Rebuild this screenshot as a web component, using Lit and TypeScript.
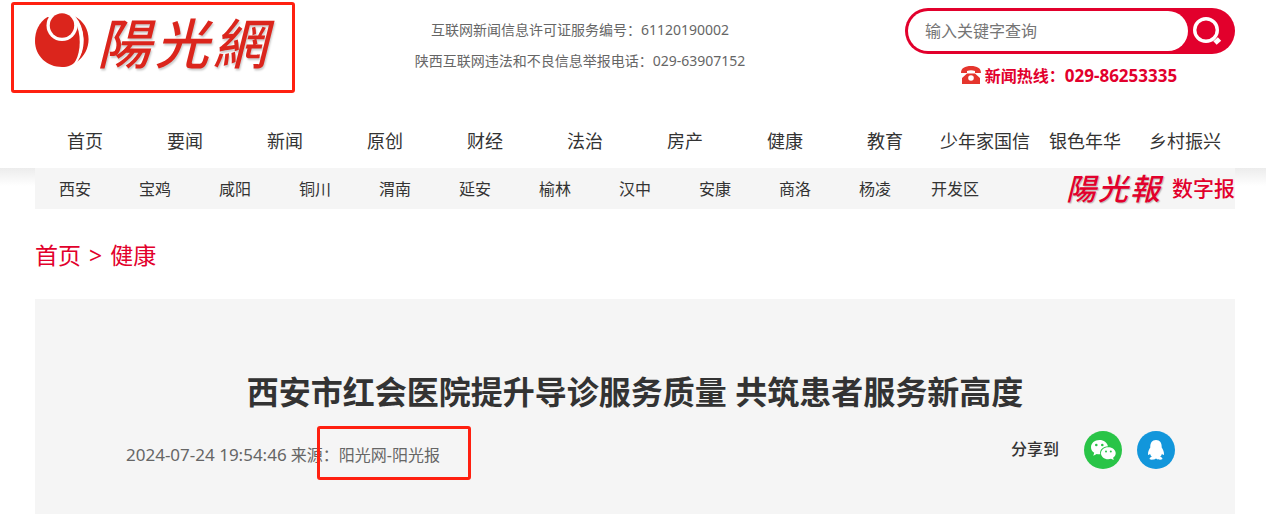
import { LitElement, html, css } from "lit";
import { customElement } from "lit/decorators.js";

const channels = ["首页", "要闻", "新闻", "原创", "财经", "法治", "房产", "健康", "教育", "少年家国信", "银色年华", "乡村振兴"];
const cities = ["西安", "宝鸡", "咸阳", "铜川", "渭南", "延安", "榆林", "汉中", "安康", "商洛", "杨凌", "开发区"];

@customElement("app-root")
export class AppRoot extends LitElement {
  static styles = css`
    :host {
      display: block;
      font-family: "Noto Sans", "Noto Sans CJK SC", sans-serif;
      font-size: 16px;
      color: #333;
      background: #fff;
    }
    * { box-sizing: border-box; }
    a { color: inherit; text-decoration: none; }
    .wrap { padding: 0 31px 0 35px; }
    .top { display: flex; height: 114px; }
    .brand { position: relative; width: 350px; flex: none; }
    .logo { display: flex; align-items: center; height: 82px; gap: 6px; }
    .emblem { width: 56px; height: 56px; flex: none; }
    .brush {
      display: flex;
      font-family: "Noto Sans CJK TC", "Noto Sans CJK SC", sans-serif;
      font-style: italic;
      font-weight: 500;
      line-height: 1;
    }
    .brush-lg { font-size: 54px; gap: 4px; color: #db251c; text-shadow: 1px 2px 2px #ccc; }
    .brush-sm { font-size: 30px; gap: 2px; color: #e2002c; text-shadow: 1px 1px 1px #bbb; }
    .mark { position: absolute; border: 3px solid #ff2010; border-radius: 3px; pointer-events: none; }
    .mark-logo { left: -24px; top: 2px; width: 284px; height: 91px; }
    .license {
      width: 390px;
      flex: none;
      padding-top: 14px;
      text-align: center;
      font-size: 14px;
      line-height: 31px;
      color: #666;
    }
    .license p { margin: 0; }
    .tools { width: 330px; flex: none; margin-left: auto; padding-top: 8px; }
    .search { display: flex; height: 46px; padding: 3px; border-radius: 23px; background: #e2002c; }
    .field {
      flex: 1;
      min-width: 0;
      border: 0;
      outline: 0;
      border-radius: 20px;
      padding: 0 17px;
      font: inherit;
      color: #333;
      background: #fff;
    }
    .field::placeholder { color: #757575; opacity: 1; }
    .go { width: 44px; padding: 0; border: 0; background: none; cursor: pointer; }
    .go svg { display: block; width: 38px; height: 38px; }
    .hotline {
      display: flex;
      align-items: center;
      justify-content: center;
      height: 42px;
      margin: 0;
      padding-right: 2px;
      font-weight: 700;
      color: #e2002c;
    }
    .hotline svg { width: 20px; height: 18px; margin-right: 4px; }
    .digits { font-size: 17px; }
    .channels { display: grid; grid-template-columns: repeat(12, 1fr); height: 54px; }
    .channels a { text-align: center; font-size: 18px; line-height: 54px; white-space: nowrap; }
    .band { background: linear-gradient(#ececec, #fff 18px); }
    .sub { display: flex; height: 41px; background: #f5f5f5; }
    .cities { display: grid; grid-template-columns: repeat(12, 1fr); flex: 0 1 960px; }
    .cities a { text-align: center; line-height: 42px; white-space: nowrap; }
    .paper {
      display: flex;
      align-items: center;
      gap: 12px;
      margin-left: auto;
      padding-bottom: 4px;
      font-size: 21px;
      font-weight: 500;
      color: #e2002c;
      font-family: "Noto Sans CJK SC", sans-serif;
      white-space: nowrap;
    }
    .crumbs { display: flex; gap: 8px; height: 90px; font-size: 23px; line-height: 92px; color: #e2002c; }
    .article { padding: 67px 60px 45px 91px; background: #f5f5f5; }
    .title { margin: 0 31px 0 0; text-align: center; font-size: 32px; line-height: 52px; font-weight: 700; }
    .info { display: flex; justify-content: space-between; align-items: flex-start; padding-top: 13px; }
    .meta { margin: 0; line-height: 24px; padding-top: 12px; color: #666; }
    .meta time { font-size: 17px; }
    .source { position: relative; }
    .mark-source { left: -22px; top: -18px; width: 154px; height: 54px; }
    .share { display: flex; align-items: center; gap: 15px; font-weight: 500; font-family: "Noto Sans CJK SC", sans-serif; }
    .share-label { padding: 0 10px 4px 0; }
    .share svg { display: block; width: 38px; height: 38px; }
  `;

  render() {
    return html`
      <header>
        <div class="wrap top">
          <div class="brand">
            <a class="logo" href="#" aria-label="陽光網">
              <svg class="emblem" viewBox="0 0 56 56" aria-hidden="true">
                <path fill="#db251c" d="M12.500 4C4 9 0 18 0 28C0 43 12 54 27 54C33 54 38 52 40.500 48C46 38 46.500 20 40 9Z" />
                <circle cx="27" cy="12.500" r="15.500" fill="#fff" />
                <circle cx="27" cy="12.500" r="12.200" fill="#db251c" />
                <path fill="#db251c" d="M39 3C58 12 58 38 41.500 49C51 36 51 16 39 3Z" />
                <path fill="none" stroke="#fff" stroke-width="1.500" d="M39 3C50.500 16 50.500 36 41 49.500" />
              </svg>
              <span class="brush brush-lg"><span>陽</span><span>光</span><span>網</span></span>
            </a>
            <span class="mark mark-logo"></span>
          </div>
          <div class="license">
            <p>互联网新闻信息许可证服务编号：61120190002</p>
            <p>陕西互联网违法和不良信息举报电话：029-63907152</p>
          </div>
          <div class="tools">
            <form class="search" role="search" @submit=${(e: Event) => e.preventDefault()}>
              <input class="field" type="text" aria-label="输入关键字查询" placeholder="输入关键字查询" />
              <button class="go" type="submit" aria-label="查询">
                <svg viewBox="0 0 38 38" fill="none" stroke="#fff" aria-hidden="true">
                  <circle cx="18" cy="18" r="11.300" stroke-width="3.400" />
                  <path d="M27 31L31.500 27" stroke-width="5" />
                </svg>
              </button>
            </form>
            <p class="hotline">
              <svg viewBox="0 0 20 18" aria-hidden="true">
                <path fill="#e5352d" d="M0 7C0 2 4 0 10 0S20 2 20 7H14V5Q10 3.500 6 5V7ZM6 7.500H14L19 12V18H1V12Z" />
                <circle cx="10" cy="12" r="2.800" fill="#fff" />
              </svg>
              <span>新闻热线：</span><span class="digits">029-86253335</span>
            </p>
          </div>
        </div>
        <nav class="wrap channels" aria-label="频道">
          ${channels.map((c) => html`<a href="#">${c}</a>`)}
        </nav>
        <div class="wrap band">
          <div class="sub">
            <nav class="cities" aria-label="地区">
              ${cities.map((c) => html`<a href="#">${c}</a>`)}
            </nav>
            <a class="paper" href="#">
              <span class="brush brush-sm"><span>陽</span><span>光</span><span>報</span></span>
              <span>数字报</span>
            </a>
          </div>
        </div>
      </header>
      <main class="wrap">
        <nav class="crumbs" aria-label="当前位置">
          <a href="#">首页</a><span>&gt;</span><a href="#">健康</a>
        </nav>
        <article class="article">
          <h1 class="title">西安市红会医院提升导诊服务质量 共筑患者服务新高度</h1>
          <div class="info">
            <p class="meta">
              <time datetime="2024-07-24T19:54:46">2024-07-24 19:54:46</time>
              来源：<span class="source">阳光网-阳光报<span class="mark mark-source"></span></span>
            </p>
            <div class="share">
              <span class="share-label">分享到</span>
              <a href="#" aria-label="微信">
                <svg viewBox="0 0 38 38" aria-hidden="true">
                  <circle cx="19" cy="19" r="19" fill="#29c447" />
                  <path fill="#fff" d="M15.500 9C10.500 9 7 12.200 7 16.200C7 18.600 8.200 20.500 10.200 21.800L9.300 24.700L12.700 23C13.800 23.300 15 23.400 16.300 23.300C15.300 19 19 15.300 24 15.300C23.200 11.500 19.800 9 15.500 9Z" />
                  <path fill="#fff" d="M24.300 16.200C20 16.200 17 18.900 17 22.200S20 28.200 24.300 28.200C25.300 28.200 26.200 28 27 27.700L29.800 29.100L29.100 26.700C30.800 25.600 31.700 24 31.700 22.200C31.700 18.900 28.600 16.200 24.300 16.200Z" />
                  <g fill="#29c447"><circle cx="12.300" cy="14" r="1.300" /><circle cx="18.300" cy="14" r="1.300" /><circle cx="22" cy="20.500" r="1" /><circle cx="26.800" cy="20.500" r="1" /></g>
                </svg>
              </a>
              <a href="#" aria-label="QQ">
                <svg viewBox="0 0 38 38" aria-hidden="true">
                  <circle cx="19" cy="19" r="19" fill="#1296db" />
                  <path fill="#fff" d="M19 9C15 9 13 12 13.300 16.500C12 18.500 10.800 21 11 23.300C11.200 24.500 12 24.200 13 22.700C13.300 24 14 25 14.800 25.700C13 26.300 12 27.500 12.800 28.200C14 29.100 17.500 28.700 19 27.500C20.500 28.700 24 29.100 25.200 28.200C26 27.500 25 26.300 23.200 25.700C24 25 24.700 24 25 22.700C26 24.200 26.800 24.500 27 23.300C27.200 21 26 18.500 24.700 16.500C25 12 23 9 19 9Z" />
                </svg>
              </a>
            </div>
          </div>
        </article>
      </main>
    `;
  }
}
